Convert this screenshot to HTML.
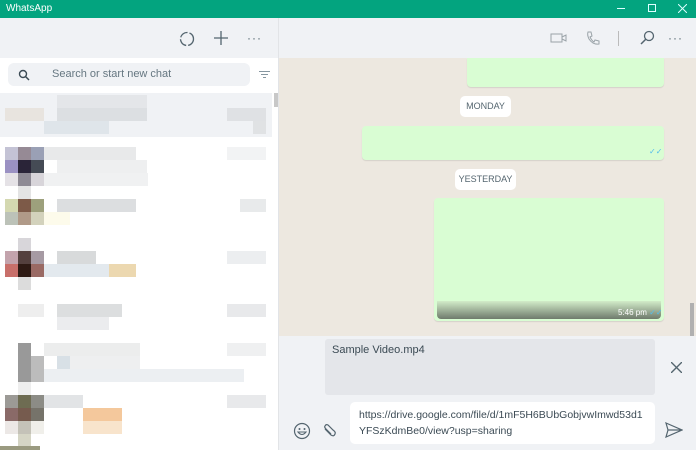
<!DOCTYPE html>
<html><head><meta charset="utf-8"><style>
*{margin:0;padding:0;box-sizing:border-box}
body{width:696px;height:450px;overflow:hidden;position:relative;font-family:"Liberation Sans",sans-serif;background:#fff}
.a{position:absolute}
.b{position:absolute;width:13px;height:13px}
</style></head><body>
<div class="a" style="left:0;top:0;width:696px;height:18px;background:#03a47f"></div>
<div class="a" style="left:6px;top:3px;font-size:10px;color:#fff">WhatsApp</div>
<div class="a" style="left:617px;top:8px;width:8px;height:1px;background:#dff"></div>
<div class="a" style="left:648px;top:4px;width:8px;height:8px;border:1px solid #dff"></div>
<svg class="a" style="left:678px;top:4px" width="9" height="9"><path d="M0 0L9 9M9 0L0 9" stroke="#dff" stroke-width="1"/></svg>
<div class="a" style="left:0;top:18px;width:696px;height:40px;background:#f0f2f5"></div>
<div class="a" style="left:278px;top:18px;width:1px;height:432px;background:#e2e4e7"></div>
<svg class="a" style="left:178px;top:30px" width="18" height="18"><circle cx="9" cy="9" r="6.5" fill="none" stroke="#54656f" stroke-width="1.3" stroke-dasharray="9 2"/></svg>
<svg class="a" style="left:213px;top:30px" width="16" height="16"><path d="M8 1V15M1 8H15" stroke="#54656f" stroke-width="1.3"/></svg>
<div class="a" style="left:247px;top:31px;font-size:12px;color:#54656f;letter-spacing:1px">···</div>
<svg class="a" style="left:550px;top:32px" width="18" height="12"><rect x="1" y="2" width="11" height="8" fill="none" stroke="#9aa3a8"/><path d="M12 5L16 3V9L12 7" fill="none" stroke="#9aa3a8"/></svg>
<svg class="a" style="left:585px;top:30px" width="16" height="16"><path d="M3 2L6 2L7 6L5 7Q7 11 9 12L10 10L14 11L14 14Q8 15 4 9Q2 5 3 2Z" fill="none" stroke="#9aa3a8"/></svg>
<div class="a" style="left:618px;top:31px;width:1px;height:15px;background:#bbb"></div>
<svg class="a" style="left:639px;top:30px" width="16" height="16"><circle cx="10" cy="6" r="4.5" fill="none" stroke="#54656f" stroke-width="1.3"/><path d="M7 9L2 14" stroke="#54656f" stroke-width="1.5"/></svg>
<div class="a" style="left:668px;top:31px;font-size:12px;color:#54656f;letter-spacing:1px">···</div>
<div class="a" style="left:8px;top:63px;width:242px;height:23px;background:#f0f2f5;border-radius:6px"></div>
<svg class="a" style="left:18px;top:69px" width="12" height="12"><circle cx="5" cy="5" r="3.5" fill="none" stroke="#3b4a54" stroke-width="1.4"/><path d="M7.5 7.5L11 11" stroke="#3b4a54" stroke-width="1.5"/></svg>
<div class="a" style="left:52px;top:68px;font-size:11px;color:#667781">Search or start new chat</div>
<div class="a" style="left:259px;top:71px;width:11px;height:1px;background:#8696a0"></div>
<div class="a" style="left:261px;top:74px;width:7px;height:1px;background:#8696a0"></div>
<div class="a" style="left:263px;top:77px;width:3px;height:1px;background:#8696a0"></div>
<div class="a" style="left:0;top:93px;width:272px;height:44px;background:#f0f2f5"></div>
<div class="a" style="left:274px;top:93px;width:4px;height:14px;background:#c8c8c8"></div>
<div class="b" style="left:57px;top:95px;width:90px;background:#e4e6e9"></div>
<div class="b" style="left:5px;top:108px;width:39px;background:#e8e4df"></div>
<div class="b" style="left:57px;top:108px;width:90px;background:#dcdfe2"></div>
<div class="b" style="left:44px;top:121px;width:65px;background:#dfe5ea"></div>
<div class="b" style="left:227px;top:108px;width:39px;background:#dfe1e4"></div>
<div class="b" style="left:253px;top:121px;background:#e0e2e4"></div>
<div class="b" style="left:5px;top:147px;background:#c4c3d5"></div><div class="b" style="left:18px;top:147px;background:#968a95"></div><div class="b" style="left:31px;top:147px;background:#9aa0b5"></div>
<div class="b" style="left:5px;top:160px;background:#9b91c3"></div><div class="b" style="left:18px;top:160px;background:#2a2438"></div><div class="b" style="left:31px;top:160px;background:#454b55"></div>
<div class="b" style="left:5px;top:173px;background:#e5e2e6"></div><div class="b" style="left:18px;top:173px;background:#8e8a94"></div><div class="b" style="left:31px;top:173px;background:#d8d5da"></div>
<div class="b" style="left:18px;top:186px;background:#e4e4e4"></div>
<div class="b" style="left:44px;top:147px;width:92px;background:#e8e9ea"></div>
<div class="b" style="left:57px;top:160px;width:90px;background:#eeeff0"></div>
<div class="b" style="left:44px;top:173px;width:104px;background:#f0f1f2"></div>
<div class="b" style="left:227px;top:147px;width:39px;background:#f2f3f4"></div>
<div class="b" style="left:5px;top:199px;background:#d4d8b0"></div><div class="b" style="left:18px;top:199px;background:#7d5a48"></div><div class="b" style="left:31px;top:199px;background:#9da07c"></div>
<div class="b" style="left:5px;top:212px;background:#bcc2b8"></div><div class="b" style="left:18px;top:212px;background:#b09a88"></div><div class="b" style="left:31px;top:212px;background:#d3d2bc"></div>
<div class="b" style="left:18px;top:238px;background:#d8d6da"></div>
<div class="b" style="left:57px;top:199px;width:79px;background:#dcdee0"></div>
<div class="b" style="left:44px;top:212px;width:26px;background:#fdfbeb"></div>
<div class="b" style="left:240px;top:199px;width:26px;background:#e8eaeb"></div>
<div class="b" style="left:5px;top:251px;background:#c3a3ac"></div><div class="b" style="left:18px;top:251px;background:#54403e"></div><div class="b" style="left:31px;top:251px;background:#a69aa3"></div>
<div class="b" style="left:5px;top:264px;background:#c86f6a"></div><div class="b" style="left:18px;top:264px;background:#2e1a14"></div><div class="b" style="left:31px;top:264px;background:#9a6a64"></div>
<div class="b" style="left:18px;top:277px;background:#dcdcdc"></div>
<div class="b" style="left:57px;top:251px;width:39px;background:#d8dadb"></div>
<div class="b" style="left:44px;top:264px;width:66px;background:#e3e9ee"></div>
<div class="b" style="left:109px;top:264px;width:27px;background:#ecd8b0"></div>
<div class="b" style="left:227px;top:251px;width:39px;background:#eceef0"></div>
<div class="b" style="left:18px;top:304px;width:26px;background:#eeeeee"></div>
<div class="b" style="left:57px;top:304px;width:65px;background:#dcdedf"></div>
<div class="b" style="left:57px;top:317px;width:52px;background:#ebecee"></div>
<div class="b" style="left:227px;top:304px;width:39px;background:#e8e9eb"></div>
<div class="b" style="left:18px;top:343px;height:39px;background:#999"></div>
<div class="b" style="left:31px;top:356px;height:26px;background:#bcbcbc"></div>
<div class="b" style="left:18px;top:382px;background:#eee"></div>
<div class="b" style="left:44px;top:343px;width:96px;background:#eceded"></div>
<div class="b" style="left:57px;top:356px;width:13px;background:#d8e0e6"></div>
<div class="b" style="left:70px;top:356px;width:70px;background:#eeeff0"></div>
<div class="b" style="left:44px;top:369px;width:200px;background:#eceff2"></div>
<div class="b" style="left:227px;top:343px;width:39px;background:#eff0f1"></div>
<div class="b" style="left:5px;top:395px;background:#9c9a96"></div><div class="b" style="left:18px;top:395px;background:#6e6c52"></div><div class="b" style="left:31px;top:395px;background:#8c8c86"></div>
<div class="b" style="left:5px;top:408px;background:#8a6a68"></div><div class="b" style="left:18px;top:408px;background:#765b4e"></div><div class="b" style="left:31px;top:408px;background:#76736a"></div>
<div class="b" style="left:5px;top:421px;background:#ece8e6"></div><div class="b" style="left:18px;top:421px;background:#c4c2b8"></div><div class="b" style="left:31px;top:421px;background:#f0efea"></div>
<div class="b" style="left:18px;top:434px;background:#d5d5c5"></div>
<div class="b" style="left:44px;top:395px;width:39px;background:#e2e4e6"></div>
<div class="b" style="left:83px;top:408px;width:39px;background:#f4c89c"></div>
<div class="b" style="left:83px;top:421px;width:39px;background:#f8e4cc"></div>
<div class="b" style="left:227px;top:395px;width:39px;background:#e8e9eb"></div>
<div class="a" style="left:0;top:446px;width:40px;height:4px;background:#9a9a80"></div>
<div class="a" style="left:279px;top:58px;width:417px;height:278px;background:#ede8e0"></div>
<div class="a" style="left:690px;top:303px;width:4px;height:33px;background:#b0b0b0"></div>
<div class="a" style="left:467px;top:58px;width:197px;height:29px;background:#d9fdd3;border-radius:0 0 4px 4px;box-shadow:0 1px 1px rgba(0,0,0,.1)"></div>
<div class="a" style="left:460px;top:96px;width:51px;height:21px;background:#fff;border-radius:5px;font-size:9px;color:#54656f;text-align:center;line-height:21px">MONDAY</div>
<div class="a" style="left:362px;top:126px;width:302px;height:34px;background:#d9fdd3;border-radius:4px;box-shadow:0 1px 1px rgba(0,0,0,.1)"></div>
<div class="a" style="left:649px;top:147px;font-size:8px;color:#53bdeb">✓✓</div>
<div class="a" style="left:455px;top:169px;width:61px;height:21px;background:#fff;border-radius:5px;font-size:9px;color:#54656f;text-align:center;line-height:21px">YESTERDAY</div>
<div class="a" style="left:434px;top:198px;width:230px;height:123px;background:#d9fdd3;border-radius:4px;box-shadow:0 1px 1px rgba(0,0,0,.1)"></div>
<div class="a" style="left:437px;top:301px;width:224px;height:18px;background:linear-gradient(#d2ecc9,#6f7a6c);border-radius:0 0 4px 4px"></div>
<div class="a" style="left:618px;top:308px;font-size:8px;color:#fff">5:46 pm <span style="color:#53bdeb">✓✓</span></div>
<div class="a" style="left:279px;top:336px;width:417px;height:114px;background:#f0f2f5"></div>
<div class="a" style="left:325px;top:339px;width:330px;height:56px;background:#e4e6ea;border-radius:3px"></div>
<div class="a" style="left:332px;top:344px;font-size:11px;color:#3b4a54">Sample Video.mp4</div>
<svg class="a" style="left:671px;top:362px" width="11" height="11"><path d="M0 0L11 11M11 0L0 11" stroke="#54656f" stroke-width="1.4"/></svg>
<div class="a" style="left:350px;top:402px;width:305px;height:42px;background:#fff;border-radius:5px"></div>
<div class="a" style="left:359px;top:407px;font-size:10.5px;color:#3b4a54;line-height:16px">https://drive.google.com/file/d/1mF5H6BUbGobjvwImwd53d1<br>YFSzKdmBe0/view?usp=sharing</div>
<svg class="a" style="left:293px;top:422px" width="18" height="18"><circle cx="9" cy="9" r="7.5" fill="none" stroke="#54656f" stroke-width="1.2"/><circle cx="6.5" cy="7" r="1" fill="#54656f"/><circle cx="11.5" cy="7" r="1" fill="#54656f"/><path d="M5 10Q9 15 13 10Z" fill="none" stroke="#54656f" stroke-width="1.1"/></svg>
<svg class="a" style="left:321px;top:422px" width="18" height="18"><path d="M4 7L10 13Q13 15 14 12Q15 10 12 8L7 3Q5 2 4 4Q3 5 5 7L10 12" fill="none" stroke="#54656f" stroke-width="1.2"/></svg>
<svg class="a" style="left:665px;top:422px" width="18" height="16"><path d="M1 1L17 8L1 15L3 8Z M3 8H17" fill="none" stroke="#54656f" stroke-width="1.2"/></svg>
</body></html>
